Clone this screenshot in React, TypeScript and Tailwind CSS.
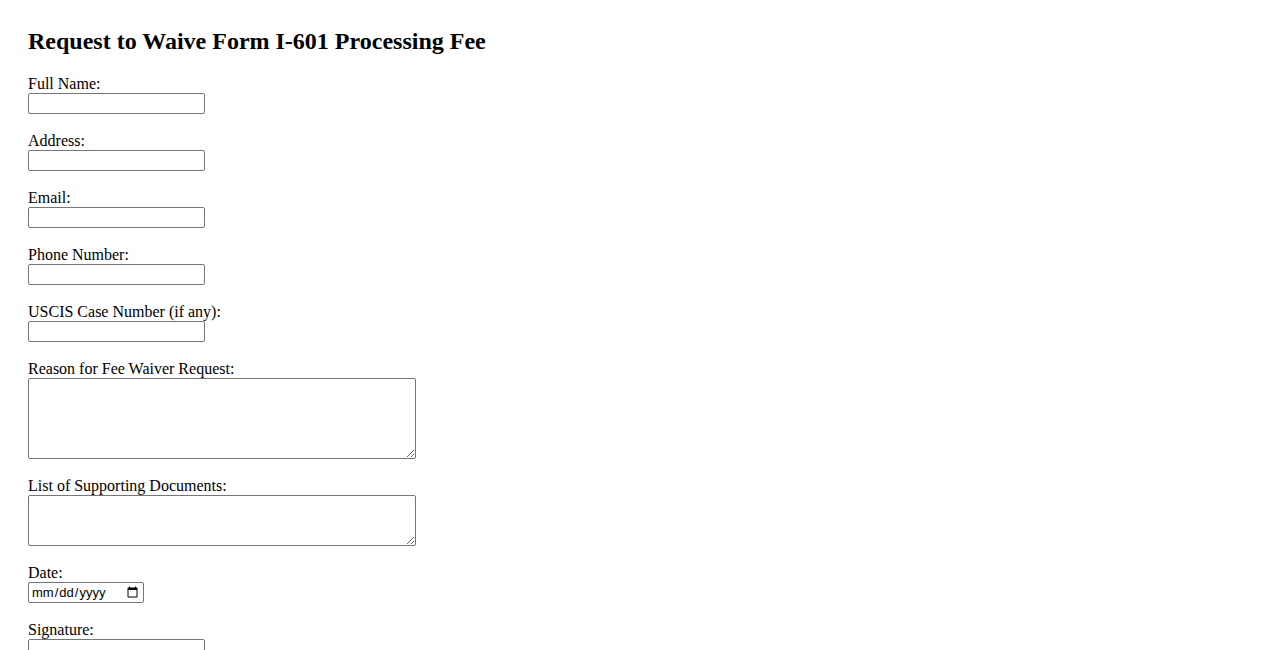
import React from "react";

const inputBase =
  "block border border-[#767676] rounded-[2px] bg-white px-[2px] py-[1px] text-[13.33px] font-['Liberation_Sans',Arial,sans-serif] text-black outline-none";

const fields = [
  { id: "fullName", label: "Full Name:", type: "text" },
  { id: "address", label: "Address:", type: "text" },
  { id: "email", label: "Email:", type: "email" },
  { id: "phone", label: "Phone Number:", type: "tel" },
  { id: "caseNumber", label: "USCIS Case Number (if any):", type: "text" },
];

function Label({ htmlFor, children }: { htmlFor: string; children: React.ReactNode }) {
  return (
    <label htmlFor={htmlFor} className="block h-[18px] leading-[18px]">
      {children}
    </label>
  );
}

export default function App() {
  return (
    <div className="min-h-screen bg-white text-black font-['Liberation_Serif','Times_New_Roman',serif] text-[16px] pl-[28px] pt-[27px] pb-10">
      <h2 className="text-[24px] font-bold leading-[28px]">
        Request to Waive Form I-601 Processing Fee
      </h2>

      <form className="mt-[20px] flex flex-col gap-[18px]" onSubmit={(e) => e.preventDefault()}>
        {fields.map((f) => (
          <div key={f.id}>
            <Label htmlFor={f.id}>{f.label}</Label>
            <input id={f.id} type={f.type} className={inputBase + " w-[177px] h-[21px]"} />
          </div>
        ))}

        <div>
          <Label htmlFor="reason">Reason for Fee Waiver Request:</Label>
          <textarea id="reason" className={inputBase + " w-[388px] h-[81px]"} />
        </div>

        <div>
          <Label htmlFor="docs">List of Supporting Documents:</Label>
          <textarea id="docs" className={inputBase + " w-[388px] h-[51px]"} />
        </div>

        <div>
          <Label htmlFor="date">Date:</Label>
          <input
            id="date"
            type="date"
            className={inputBase + " w-[116px] h-[21px] font-['Liberation_Mono',monospace] text-[13px]"}
          />
        </div>

        <div>
          <Label htmlFor="signature">Signature:</Label>
          <input id="signature" type="text" className={inputBase + " w-[177px] h-[21px]"} />
        </div>

        <div>
          <button
            type="submit"
            className="border border-[#767676] rounded-[2px] bg-[#efefef] px-[6px] py-[1px] text-[13.33px] font-['Liberation_Sans',Arial,sans-serif]"
          >
            Submit Request
          </button>
        </div>
      </form>
    </div>
  );
}
